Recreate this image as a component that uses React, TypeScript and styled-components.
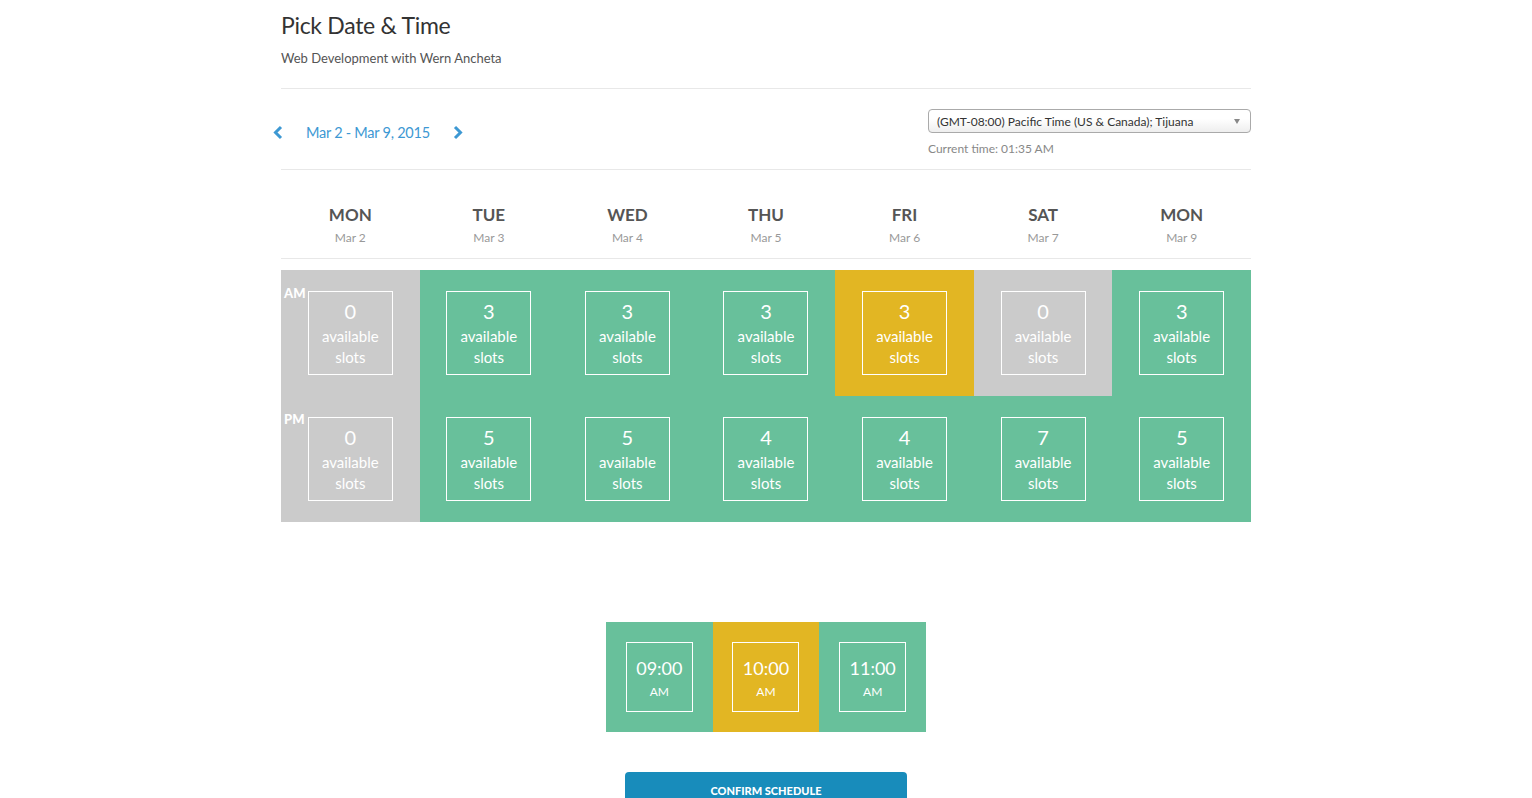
import { createGlobalStyle, styled } from "styled-components";

const GlobalStyle = createGlobalStyle`
    body {
        margin: 0;
        background: #fff;
        font-family: "Lato", "Open Sans", sans-serif;
        color: #333;
    }
`;

type SlotStatus = "none" | "open" | "picked";

const statusColor = (status: SlotStatus) =>
    status === "picked" ? "#e2b623" : status === "none" ? "#cbcbcb" : "#68c09b";

const Page = styled.div`
    width: 970px;
    margin: 0 auto;
    padding-top: 10px;
`;

const Title = styled.h1`
    margin: 0;
    font-size: 23px;
    line-height: 30px;
    font-weight: 400;
    letter-spacing: -0.3px;
    color: #333;
`;

const Subtitle = styled.p`
    margin: 9px 0 0;
    font-size: 13px;
    line-height: 18px;
    color: #555;
`;

const Rule = styled.hr<{ $gap: number }>`
    border: 0;
    border-top: 1px solid #e8e8e8;
    margin: ${(p) => p.$gap}px 0 0;
`;

const NavRow = styled.div`
    display: flex;
    justify-content: space-between;
    align-items: flex-start;
    height: 80px;
`;

const WeekNav = styled.div`
    display: flex;
    align-items: center;
    gap: 22px;
    margin: 35px 0 0 -9px;
`;

const ArrowButton = styled.button`
    border: 0;
    background: none;
    padding: 0;
    display: flex;
    cursor: pointer;
`;

const WeekLabel = styled.span`
    font-size: 14.5px;
    letter-spacing: -0.25px;
    color: #3d98d3;
`;

const ZoneBox = styled.div`
    width: 323px;
    margin-top: 20px;
`;

const ZoneSelect = styled.div`
    height: 24px;
    box-sizing: border-box;
    border: 1px solid #aaa;
    border-radius: 4px;
    background: linear-gradient(#fff 40%, #eee);
    display: flex;
    align-items: center;
    justify-content: space-between;
    padding: 0 10px 0 8px;
    font-size: 12px;
    color: #333;
`;

const Caret = styled.span`
    width: 0;
    height: 0;
    border-left: 3.5px solid transparent;
    border-right: 3.5px solid transparent;
    border-top: 5px solid #888;
`;

const CurrentTime = styled.div`
    margin-top: 8px;
    font-size: 12px;
    color: #888;
`;

const DayHeader = styled.div`
    display: grid;
    grid-template-columns: repeat(7, 1fr);
    height: 88px;
`;

const DayCell = styled.div`
    display: flex;
    flex-direction: column;
    align-items: center;
    padding-top: 34px;
`;

const DayName = styled.div`
    font-size: 17px;
    font-weight: 700;
    color: #555;
    line-height: 22px;
`;

const DayDate = styled.div`
    margin-top: 4px;
    font-size: 12px;
    color: #999;
`;

const SlotGrid = styled.div`
    display: grid;
    grid-template-columns: repeat(7, 1fr);
    grid-template-rows: 126px 126px;
    grid-auto-flow: column;
    margin-top: 11px;
`;

const SlotCell = styled.div<{ $status: SlotStatus }>`
    position: relative;
    background: ${(p) => statusColor(p.$status)};
    display: flex;
    align-items: center;
    justify-content: center;
`;

const PeriodTag = styled.span`
    position: absolute;
    top: 15px;
    left: 3px;
    font-size: 13px;
    font-weight: 900;
    color: #fff;
`;

const SlotBox = styled.div`
    width: 85px;
    height: 84px;
    box-sizing: border-box;
    border: 1px solid #fff;
    display: flex;
    flex-direction: column;
    align-items: center;
    justify-content: center;
    color: #fff;
    font-size: 15px;
    line-height: 21px;
`;

const SlotCount = styled.span`
    font-size: 20px;
    line-height: 24px;
    margin-bottom: 3px;
`;

const TimeRow = styled.div`
    display: grid;
    grid-template-columns: repeat(3, 1fr);
    width: 320px;
    margin: 100px auto 0;
`;

const TimeCell = styled.div<{ $status: SlotStatus }>`
    height: 110px;
    background: ${(p) => statusColor(p.$status)};
    display: flex;
    align-items: center;
    justify-content: center;
`;

const TimeBox = styled.div`
    width: 67px;
    height: 70px;
    box-sizing: border-box;
    border: 1px solid #fff;
    display: flex;
    flex-direction: column;
    align-items: center;
    justify-content: center;
    color: #fff;
`;

const TimeValue = styled.span`
    font-size: 18px;
    line-height: 24px;
`;

const TimeMeridiem = styled.span`
    font-size: 12px;
    margin-top: 4px;
`;

const ConfirmButton = styled.button`
    display: block;
    margin: 40px auto 0;
    width: 282px;
    height: 36px;
    border: 0;
    border-radius: 4px;
    background: #188cbb;
    color: #fff;
    font-family: inherit;
    font-size: 11px;
    font-weight: 900;
    padding: 0;
`;

const Chevron = ({ dir }: { dir: "left" | "right" }) => (
    <svg width="12" height="15" viewBox="0 0 12 15">
        <polyline
            points={dir === "left" ? "9,2 3.5,7.5 9,13" : "3,2 8.5,7.5 3,13"}
            fill="none"
            stroke="#3d98d3"
            strokeWidth="3"
        />
    </svg>
);

const days = [
    { name: "MON", date: "Mar 2", am: 0, pm: 0 },
    { name: "TUE", date: "Mar 3", am: 3, pm: 5 },
    { name: "WED", date: "Mar 4", am: 3, pm: 5 },
    { name: "THU", date: "Mar 5", am: 3, pm: 4 },
    { name: "FRI", date: "Mar 6", am: 3, pm: 4, pickedAm: true },
    { name: "SAT", date: "Mar 7", am: 0, pm: 7 },
    { name: "MON", date: "Mar 9", am: 3, pm: 5 },
];

const times = [
    { time: "09:00", status: "open" as SlotStatus },
    { time: "10:00", status: "picked" as SlotStatus },
    { time: "11:00", status: "open" as SlotStatus },
];

const App = () => {
    return (
        <>
            <GlobalStyle />
            <Page>
                <Title>Pick Date &amp; Time</Title>
                <Subtitle>Web Development with Wern Ancheta</Subtitle>
                <Rule $gap={21} />

                <NavRow>
                    <WeekNav>
                        <ArrowButton><Chevron dir="left" /></ArrowButton>
                        <WeekLabel>Mar 2 - Mar 9, 2015</WeekLabel>
                        <ArrowButton><Chevron dir="right" /></ArrowButton>
                    </WeekNav>
                    <ZoneBox>
                        <ZoneSelect>
                            <span>(GMT-08:00) Pacific Time (US &amp; Canada); Tijuana</span>
                            <Caret />
                        </ZoneSelect>
                        <CurrentTime>Current time: 01:35 AM</CurrentTime>
                    </ZoneBox>
                </NavRow>
                <Rule $gap={0} />

                <DayHeader>
                    {days.map((d, i) => (
                        <DayCell key={i}>
                            <DayName>{d.name}</DayName>
                            <DayDate>{d.date}</DayDate>
                        </DayCell>
                    ))}
                </DayHeader>
                <Rule $gap={0} />

                <SlotGrid>
                    {days.map((d, i) => {
                        const amStatus: SlotStatus = d.pickedAm ? "picked" : d.am === 0 ? "none" : "open";
                        const pmStatus: SlotStatus = d.pm === 0 ? "none" : "open";
                        return [
                            <SlotCell key={`am-${i}`} $status={amStatus}>
                                {i === 0 && <PeriodTag>AM</PeriodTag>}
                                <SlotBox>
                                    <SlotCount>{d.am}</SlotCount>
                                    <span>available</span>
                                    <span>slots</span>
                                </SlotBox>
                            </SlotCell>,
                            <SlotCell key={`pm-${i}`} $status={pmStatus}>
                                {i === 0 && <PeriodTag>PM</PeriodTag>}
                                <SlotBox>
                                    <SlotCount>{d.pm}</SlotCount>
                                    <span>available</span>
                                    <span>slots</span>
                                </SlotBox>
                            </SlotCell>,
                        ];
                    })}
                </SlotGrid>

                <TimeRow>
                    {times.map((t) => (
                        <TimeCell key={t.time} $status={t.status}>
                            <TimeBox>
                                <TimeValue>{t.time}</TimeValue>
                                <TimeMeridiem>AM</TimeMeridiem>
                            </TimeBox>
                        </TimeCell>
                    ))}
                </TimeRow>

                <ConfirmButton>CONFIRM SCHEDULE</ConfirmButton>
            </Page>
        </>
    );
};

export default App;
